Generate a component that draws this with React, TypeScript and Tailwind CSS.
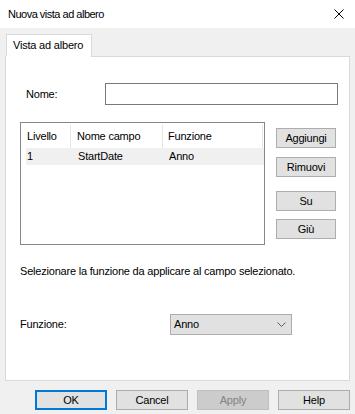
import React from 'react';

const font = { fontFamily: '"Segoe UI", "Liberation Sans", Arial, sans-serif' };

function WinButton({ label, className = '' }: { label: string; className?: string }) {
  return (
    <div
      className={`flex h-[20px] items-center justify-center border border-[#adadad] bg-[#e1e1e1] text-black ${className}`}
    >
      {label}
    </div>
  );
}

export default function App() {
  return (
    <div
      className="flex h-[414px] w-[355px] flex-col bg-[#f0f0f0] text-[11px] tracking-[-0.2px] text-black"
      style={font}
    >
      {/* Title bar */}
      <div className="flex h-[28px] items-center justify-between bg-white pl-[8px] pr-[10px]">
        <span className="text-[11px] tracking-[-0.5px]">Nuova vista ad albero</span>
        <svg width="10" height="10" viewBox="0 0 10 10" className="mr-[1px]">
          <path d="M0.5 0.5 L9.5 9.5 M9.5 0.5 L0.5 9.5" stroke="#000" strokeWidth="1" />
        </svg>
      </div>

      {/* Tab strip */}
      <div className="pl-[6px] pt-[6px]">
        <div className="flex h-[22px] w-[86px] items-center whitespace-nowrap border border-b-0 border-[#d9d9d9] bg-white pl-[6px]">
          Vista ad albero
        </div>
      </div>

      {/* Tab panel */}
      <div className="ml-[5px] flex h-[325px] w-[345px] flex-col border border-t-0 border-[#d9d9d9] bg-white">
        <div className="ml-[85px] border-t border-[#d9d9d9]" />
        {/* Nome */}
        <div className="mt-[26px] flex items-center">
          <span className="ml-[20px] w-[79px]">Nome:</span>
          <div className="h-[22px] w-[233px] border border-[#7a7a7a] bg-white" />
        </div>

        {/* List + buttons */}
        <div className="mt-[17px] flex">
          <div className="ml-[14px] flex h-[123px] w-[245px] flex-col border border-[#828790] bg-white pl-[5px]">
            <div className="flex h-[25px] items-stretch pt-[2px]">
              <div className="flex w-[45px] items-center border-r border-[#e5e5e5] pl-[1px]">Livello</div>
              <div className="flex w-[92px] items-center border-r border-[#e5e5e5] pl-[6px]">Nome campo</div>
              <div className="flex w-[100px] items-center border-r border-[#e5e5e5] pl-[5px]">Funzione</div>
            </div>
            <div className="flex h-[17px] w-[238px] items-center bg-[#f0f0f0]">
              <div className="w-[45px] pl-[1px]">1</div>
              <div className="w-[92px] pl-[7px]">StartDate</div>
              <div className="pl-[6px]">Anno</div>
            </div>
          </div>
          <div className="ml-[11px] mt-[6px] flex w-[60px] flex-col">
            <WinButton label="Aggiungi" />
            <WinButton label="Rimuovi" className="mt-[9px]" />
            <WinButton label="Su" className="mt-[14px]" />
            <WinButton label="Giù" className="mt-[8px]" />
          </div>
        </div>

        <div className="ml-[14px] mt-[18px]">Selezionare la funzione da applicare al campo selezionato.</div>

        {/* Funzione */}
        <div className="mt-[34px] flex items-center">
          <span className="ml-[14px] w-[150px]">Funzione:</span>
          <div className="flex h-[21px] w-[122px] items-center justify-between border border-[#adadad] bg-[#e1e1e1] pl-[3px] pr-[5px]">
            <span>Anno</span>
            <svg width="9" height="5" viewBox="0 0 9 5">
              <path d="M0.5 0.5 L4.5 4.5 L8.5 0.5" stroke="#606060" strokeWidth="1" fill="none" />
            </svg>
          </div>
        </div>
      </div>

      {/* Bottom buttons */}
      <div className="mt-[9px] flex gap-[9px] pl-[35px]">
        <div className="flex h-[20px] w-[72px] items-center justify-center border-2 border-[#0078d7] bg-[#e1e1e1]">OK</div>
        <WinButton label="Cancel" className="w-[72px]" />
        <div className="flex h-[20px] w-[72px] items-center justify-center border border-[#bfbfbf] bg-[#cccccc] text-[#838383]">
          Apply
        </div>
        <WinButton label="Help" className="w-[72px]" />
      </div>
    </div>
  );
}
